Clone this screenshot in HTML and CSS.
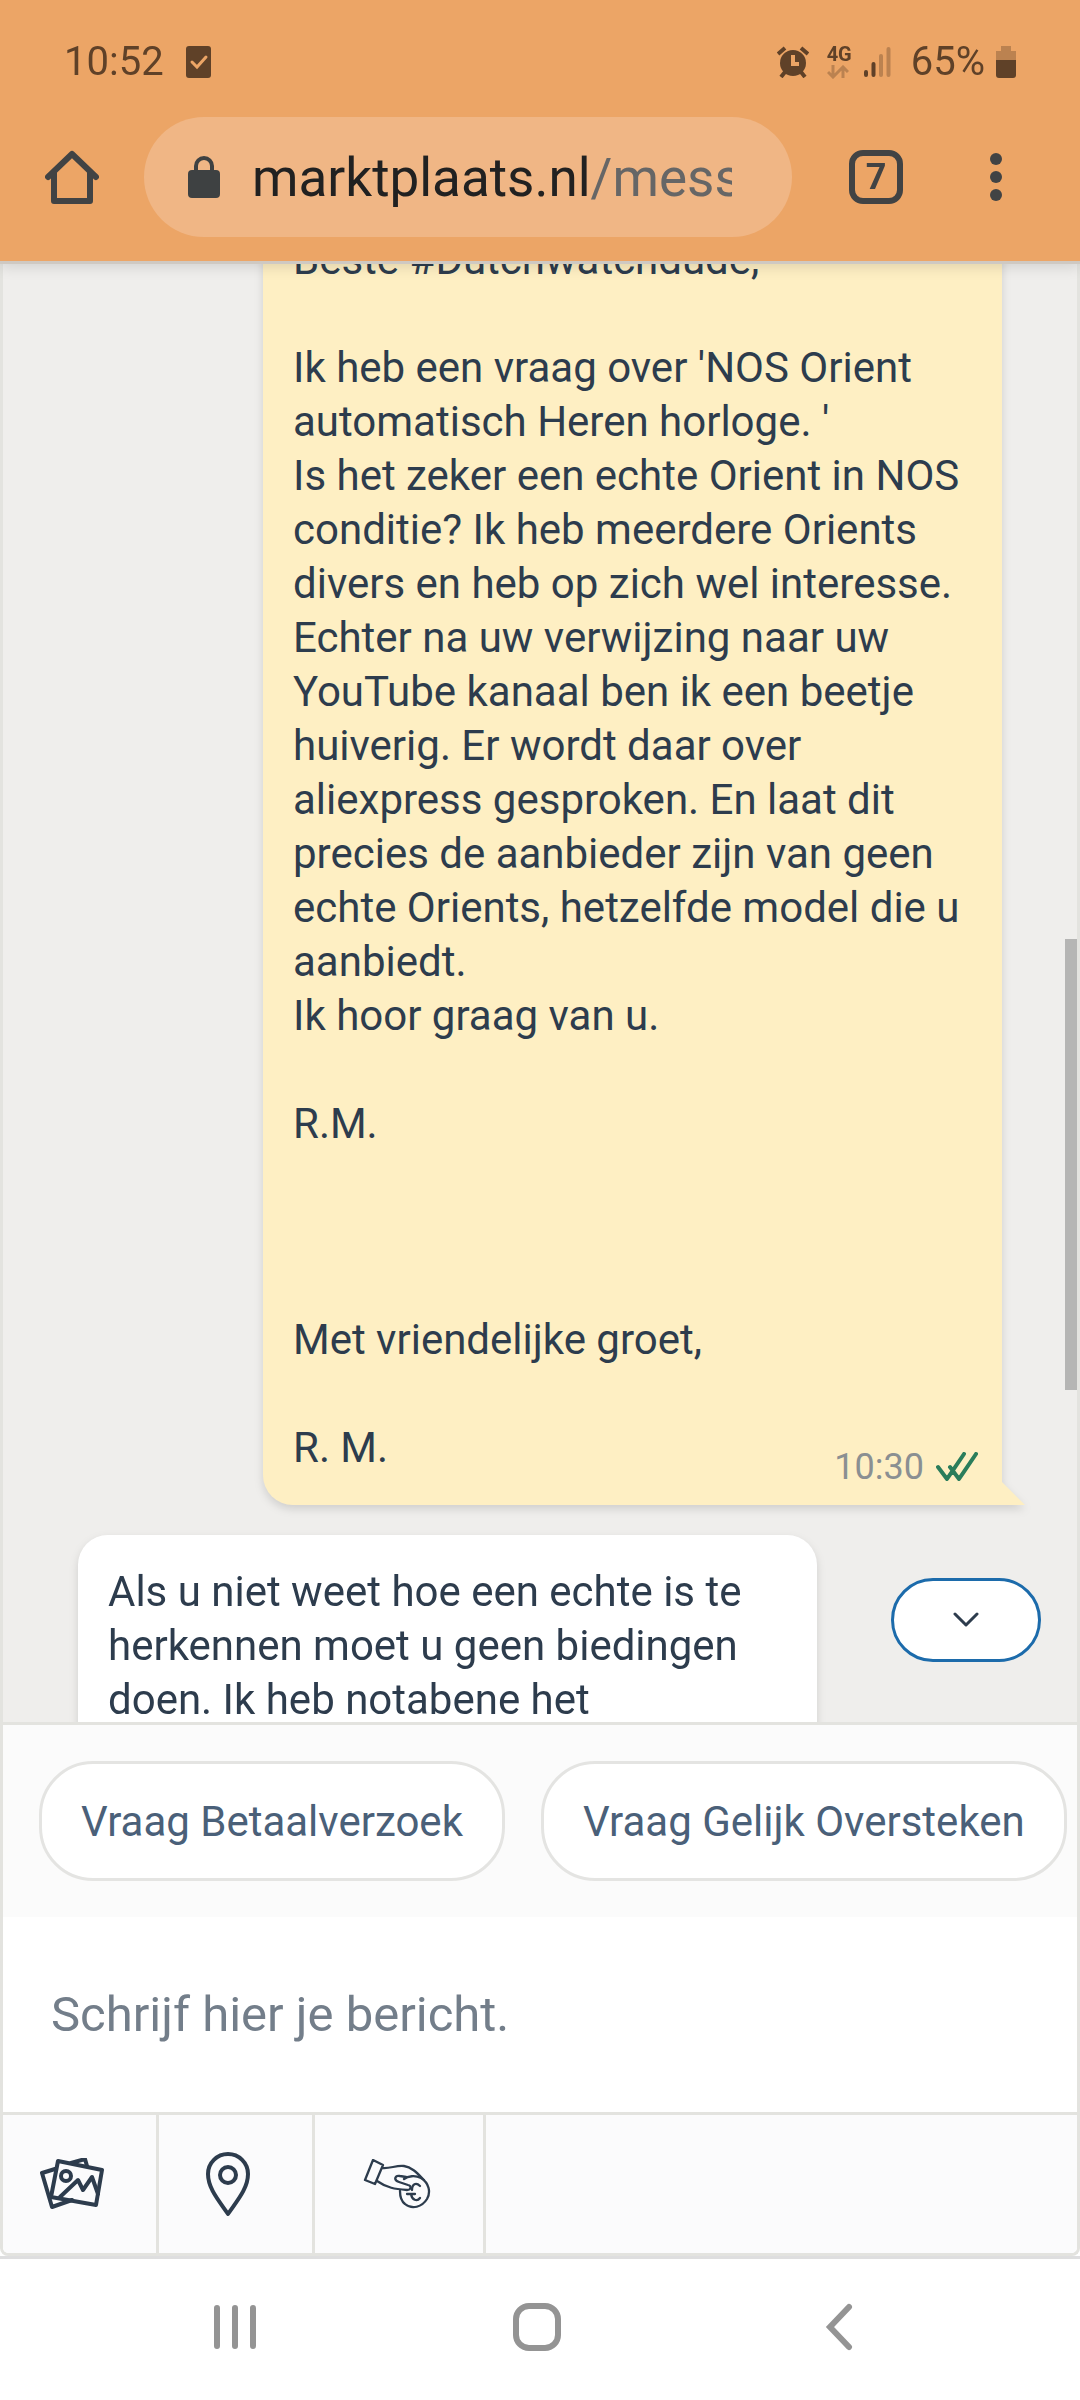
FILE: index.html
```html
<!DOCTYPE html>
<html lang="nl">
<head>
<meta charset="utf-8">
<meta name="viewport" content="width=device-width, initial-scale=1">
<title>Berichten</title>
<link rel="stylesheet" href="styles.css">
</head>
<body>
<header class="browser">
  <div class="status">
    <time class="clock">10:52</time>
    <svg class="note" width="25" height="32" viewBox="0 0 25 32"><rect width="25" height="32" rx="3" fill="#5f4128"/><path d="M6 16l5 5 9-10" fill="none" stroke="#eca566" stroke-width="3" stroke-linecap="round"/></svg>
    <svg class="alarm" width="32" height="32" viewBox="0 0 32 32"><g fill="none" stroke="#5f4128" stroke-width="4"><path d="M1 8l7-6M31 8l-7-6M8 26l-4 5M24 26l4 5"/></g><circle cx="16" cy="17" r="13" fill="#5f4128"/><path d="M16 9v9h6" fill="none" stroke="#eca566" stroke-width="4"/></svg>
    <div class="network">
      <span>4G</span>
      <svg width="22" height="14" viewBox="0 0 22 14"><path d="M6 0v11M1 7l5 5 5-5M16 13V3M11 7l5-5 5 5" fill="none" stroke="#bb8250" stroke-width="3"/></svg>
    </div>
    <svg class="signal" width="27" height="32" viewBox="0 0 27 32"><g fill="none" stroke-width="4" stroke-linecap="round"><path d="M2 26v3M9.500 18v11" stroke="#5f4128"/><path d="M17 10v19M24.500 3v26" stroke="#bb8250"/></g></svg>
    <span class="percent">65%</span>
    <svg width="20" height="32" viewBox="0 0 20 32"><path d="M5 0h10v5h5v9H0V5h5z" fill="#bb8250"/><path d="M0 14h20v15q0 3-3 3H3q-3 0-3-3z" fill="#5f4128"/></svg>
  </div>
  <div class="toolbar">
    <button class="home" aria-label="Startpagina"><svg width="54" height="54" viewBox="0 0 54 54"><path d="M3 27L27 4l24 23M9 23v28h36V23" fill="none" stroke="#414344" stroke-width="6" stroke-linecap="round" stroke-linejoin="round"/></svg></button>
    <div class="address">
      <svg width="32" height="44" viewBox="0 0 32 44"><rect y="15" width="32" height="28" rx="4" fill="#3e4142"/><path d="M8 17v-6a8 8 0 0 1 16 0v6" fill="none" stroke="#3e4142" stroke-width="4"/></svg>
      <a class="url" href="#"><span class="host">marktplaats.nl</span>/messages</a>
    </div>
    <button class="tabs" aria-label="Tabbladen">7</button>
    <button aria-label="Menu"><svg width="12" height="54" viewBox="0 0 12 54"><g fill="#414344"><circle cx="6" cy="9" r="6"/><circle cx="6" cy="27" r="6"/><circle cx="6" cy="45" r="6"/></g></svg></button>
  </div>
</header>
<main class="page">
  <section class="chat">
    <div class="thread">
      <article class="bubble sent">
        <p>Beste #Dutchwatchdude,</p>
        <p>Ik heb een vraag over 'NOS Orient
automatisch Heren horloge. '
Is het zeker een echte Orient in NOS
conditie? Ik heb meerdere Orients
divers en heb op zich wel interesse.
Echter na uw verwijzing naar uw
YouTube kanaal ben ik een beetje
huiverig. Er wordt daar over
aliexpress gesproken. En laat dit
precies de aanbieder zijn van geen
echte Orients, hetzelfde model die u
aanbiedt.
Ik hoor graag van u.</p>
        <p class="signature">R.M.</p>
        <p>Met vriendelijke groet,</p>
        <p>R. M.</p>
        <footer class="meta"><time>10:30</time><svg width="42" height="30" viewBox="0 0 42 30"><path d="M2 15l9 12L28 2M14 15l9 12L40 2" fill="none" stroke="#2a7d5b" stroke-width="4" stroke-linecap="round" stroke-linejoin="round"/></svg></footer>
      </article>
      <article class="bubble received">
        <p>Als u niet weet hoe een echte is te
herkennen moet u geen biedingen
doen. Ik heb notabene het</p>
      </article>
    </div>
    <div class="scrollbar"></div>
    <button class="jump" aria-label="Naar beneden"><svg width="26" height="16" viewBox="0 0 26 16"><path d="M2 2l11 11L24 2" fill="none" stroke="#2d3c4d" stroke-width="3" stroke-linecap="round" stroke-linejoin="round"/></svg></button>
  </section>
  <div class="replies">
    <button>Vraag Betaalverzoek</button>
    <button>Vraag Gelijk Oversteken</button>
  </div>
  <input class="compose" type="text" aria-label="Bericht" placeholder="Schrijf hier je bericht.">
  <div class="actions">
    <button class="photo" aria-label="Foto's"><svg width="64" height="52" viewBox="0 0 64 52"><g fill="none" stroke="#2d3c4d" stroke-width="4" stroke-linejoin="round" stroke-linecap="round"><path d="M15 11L2 15l10 34 20-7M31 5l14-4 2 7"/><path d="M18 3l44 9-6 35-45-8z"/><circle cx="26" cy="18" r="5"/><path d="M20 39l18-17 5 10 9-13 6 17"/></g></svg></button>
    <button class="place" aria-label="Locatie"><svg width="44" height="66" viewBox="0 0 44 66"><path d="M22 63C14 51 2 38 2 23a20 20 0 0 1 40 0c0 15-12 28-20 40z" fill="none" stroke="#2d3c4d" stroke-width="4" stroke-linejoin="round"/><circle cx="22" cy="24" r="8" fill="none" stroke="#2d3c4d" stroke-width="4"/></svg></button>
    <button class="pay" aria-label="Betaalverzoek"><svg width="68" height="50" viewBox="0 0 68 50"><g fill="none" stroke="#2d3c4d" stroke-width="2.300" stroke-linejoin="round" stroke-linecap="round"><path d="M10 1l10 5-8 19-10-4zM19 9c8 1 14-3 22-2 8 1 14 8 20 14M14 22c10 7 18 8 30 9 4 0 5-4 1-5l-9-3c-6-2-4-7 1-6l6 1"/><path d="M41 20c4-3 11-4 17-1 8 5 10 14 6 21-5 8-15 11-22 5-4-3-5-7-5-13"/><path d="M57 27c-4-4-8-2-8 4M57 39c-3 4-8 2-9-4M44 35h8"/></g></svg></button>
  </div>
</main>
<nav class="system">
  <button aria-label="Recent"><svg width="48" height="48" viewBox="0 0 48 48"><path d="M6 5v38M24 5v38M42 5v38" stroke="#949494" stroke-width="6" stroke-linecap="round"/></svg></button>
  <button aria-label="Start"><svg width="48" height="48" viewBox="0 0 48 48"><rect x="3" y="3" width="42" height="42" rx="13" fill="none" stroke="#949494" stroke-width="6"/></svg></button>
  <button aria-label="Terug"><svg width="48" height="48" viewBox="0 0 48 48"><path d="M34 4L15 24l19 20" fill="none" stroke="#949494" stroke-width="6" stroke-linecap="round"/></svg></button>
</nav>
</body>
</html>
```
FILE: styles.css
```css
* { box-sizing: border-box; }

body {
  margin: 0;
  height: 100vh;
  display: flex;
  flex-direction: column;
  font-family: Roboto, "Liberation Sans", sans-serif;
  color: #2d3c4d;
  background: #fff;
}

svg { display: block; flex: none; }

button {
  display: flex;
  align-items: center;
  justify-content: center;
  margin: 0;
  padding: 0;
  border: 0;
  background: none;
  font: inherit;
  color: inherit;
}

.browser {
  position: relative;
  z-index: 1;
  background: #eca566;
  border-bottom: 3px solid #cfc9c2;
  box-shadow: 0 2px 14px rgba(0, 0, 0, .14);
  color: #5f4128;
}

.status {
  display: flex;
  align-items: center;
  height: 117px;
  padding: 6px 64px 0;
  font-size: 40px;
}

.clock { width: 122px; }
.note { margin-right: auto; }
.alarm { margin-right: 18px; }

.network {
  display: flex;
  flex-direction: column;
  gap: 2px;
  margin-right: 12px;
  font-size: 20px;
  font-weight: 700;
  line-height: 18px;
}

.signal { margin-right: 20px; }
.percent { margin-right: 11px; }

.toolbar {
  display: flex;
  align-items: center;
  padding: 0 78px 24px 45px;
}

.home { margin-right: 45px; }

.address {
  flex: 1;
  min-width: 0;
  display: flex;
  align-items: center;
  gap: 32px;
  height: 120px;
  margin-right: 57px;
  padding: 0 60px 0 44px;
  border-radius: 60px;
  background: #f0b685;
}

.url {
  flex: 1;
  overflow: hidden;
  padding-top: 2px;
  white-space: nowrap;
  font-size: 53px;
  line-height: 72px;
  text-decoration: none;
  color: #666;
}

.host { color: #212121; }

.tabs {
  width: 54px;
  height: 54px;
  margin-right: 87px;
  border: 6px solid #414344;
  border-radius: 14px;
  font-size: 36px;
  font-weight: 700;
  color: #414344;
}

.page {
  flex: 1;
  min-height: 0;
  display: flex;
  flex-direction: column;
  border: 3px solid #e3e3df;
  border-top: 0;
  border-radius: 0 0 8px 8px;
}

.chat {
  position: relative;
  flex: 1;
  min-height: 0;
  overflow: hidden;
  background: #efeeec;
}

/* Scrolled position of the conversation */
.thread {
  display: flex;
  flex-direction: column;
  gap: 30px;
  margin-top: -61px;
  padding: 0 75px;
}

.bubble {
  position: relative;
  display: flex;
  flex-direction: column;
  align-items: flex-start;
  gap: 54px;
  width: 739px;
  padding: 30px;
  border-radius: 30px;
  font-size: 42px;
  line-height: 54px;
  filter: drop-shadow(0 4px 4px rgba(0, 0, 0, .13));
}

.bubble p {
  margin: 0;
  white-space: pre;
}

.bubble .signature { margin-bottom: 108px; }

.sent {
  align-self: flex-end;
  border-bottom-right-radius: 0;
  background: #feefc3;
}

.sent::after {
  content: "";
  position: absolute;
  left: 100%;
  bottom: 0;
  width: 23px;
  height: 23px;
  background: #feefc3;
  clip-path: polygon(0 0, 100% 100%, 0 100%);
}

.received { background: #fff; }

.meta {
  position: absolute;
  right: 24px;
  bottom: 14px;
  display: flex;
  align-items: center;
  gap: 12px;
  font-size: 36px;
  line-height: 48px;
  color: #8a8f92;
}

.scrollbar {
  position: absolute;
  top: 675px;
  right: 0;
  width: 12px;
  height: 451px;
  background: #b5b5b4;
}

.jump {
  position: absolute;
  right: 36px;
  bottom: 60px;
  width: 150px;
  height: 84px;
  border: 3px solid #1c6bab;
  border-radius: 42px;
  background: #fff;
}

.replies {
  display: flex;
  gap: 36px;
  padding: 36px;
  border-top: 3px solid #e3e3df;
  background: #fbfbfb;
  overflow: hidden;
}

.replies button {
  flex: none;
  height: 120px;
  padding: 0 39px;
  border: 3px solid #e4e4e2;
  border-radius: 54px;
  background: #fff;
  font-size: 42px;
  color: #4a6079;
}

.compose {
  height: 195px;
  padding: 0 48px;
  border: 0;
  background: #fff;
  font: inherit;
  font-size: 49px;
}

.compose::placeholder { color: #737e8a; opacity: 1; }

.actions {
  display: flex;
  height: 141px;
  border-top: 3px solid #e3e3df;
  background: #fbfbfc;
  border-radius: 0 0 6px 6px;
}

.actions button { border-right: 3px solid #e3e3df; }
.photo { width: 156px; padding-right: 16px; }
.place { width: 156px; padding-right: 16px; }
.pay { width: 171px; padding-right: 4px; }

.system {
  display: flex;
  align-items: center;
  justify-content: space-between;
  height: 144px;
  padding: 0 217px 6px 211px;
  border-top: 3px solid #dededf;
}
```
